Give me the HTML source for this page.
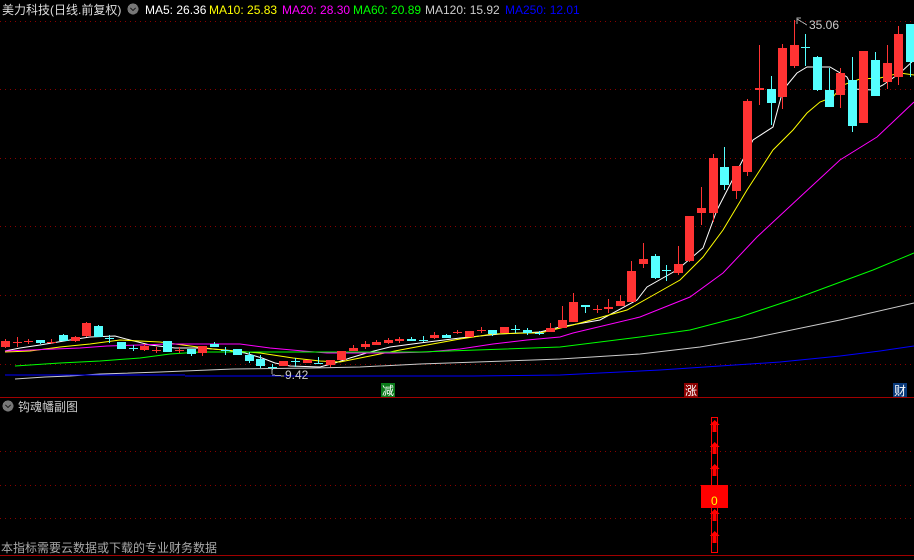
<!DOCTYPE html>
<html><head><meta charset="utf-8"><style>
html,body{margin:0;padding:0;background:#000;width:914px;height:560px;overflow:hidden}
svg{display:block}
text{font-family:"Liberation Sans","Noto Sans CJK SC",sans-serif}
</style></head><body>
<svg id="s" width="914" height="560" viewBox="0 0 914 560" xmlns="http://www.w3.org/2000/svg" shape-rendering="crispEdges">
<rect width="914" height="560" fill="#000"/>
<g stroke="#8a0000" stroke-dasharray="1,4" stroke-width="1">
<line x1="0" y1="21.5" x2="914" y2="21.5"/><line x1="0" y1="89.5" x2="914" y2="89.5"/>
<line x1="0" y1="158.5" x2="914" y2="158.5"/><line x1="0" y1="226.5" x2="914" y2="226.5"/>
<line x1="0" y1="295.5" x2="914" y2="295.5"/><line x1="0" y1="364.5" x2="914" y2="364.5"/>
<line x1="0" y1="451.5" x2="914" y2="451.5"/><line x1="0" y1="485.5" x2="914" y2="485.5"/>
<line x1="0" y1="518.5" x2="914" y2="518.5"/>
</g>
<line x1="0" y1="397.5" x2="914" y2="397.5" stroke="#a00000"/>
<line x1="0" y1="555.5" x2="914" y2="555.5" stroke="#a00000"/>
<g id="ma" fill="none" stroke-width="1" shape-rendering="auto"></g>
<g id="cd"></g>
<text x="2" y="14" fill="#ddd" font-size="12">美力科技(日线.前复权)</text>
<circle cx="133" cy="9" r="5.5" fill="#777"/><path d="M130.5 8l2.5 2.5 2.5-2.5" stroke="#222" stroke-width="1.3" fill="none"/>
<text x="145" y="14" font-size="12" fill="#fff">MA5: 26.36</text>
<text x="209" y="14" font-size="12" fill="#ff0">MA10: 25.83</text>
<text x="282" y="14" font-size="12" fill="#f0f">MA20: 28.30</text>
<text x="353" y="14" font-size="12" fill="#0f0">MA60: 20.89</text>
<text x="425" y="14" font-size="12" fill="#ccc">MA120: 15.92</text>
<text x="505" y="14" font-size="12" fill="#00f">MA250: 12.01</text>
<path d="M797 24v-6h4M797 19l10 6" stroke="#aaa" fill="none"/>
<text x="809" y="29" font-size="12" fill="#ccc">35.06</text>
<path d="M272 368v6M272 375l12 1" stroke="#aaa" fill="none"/>
<text x="285" y="379" font-size="12" fill="#ccc">9.42</text>
<rect x="381" y="383" width="14" height="14" fill="#0a7a1a"/><text x="382" y="395" font-size="12" fill="#fff">减</text>
<rect x="684" y="383" width="14" height="14" fill="#8a0000"/><text x="685" y="395" font-size="12" fill="#fff">涨</text>
<rect x="893" y="383" width="14" height="14" fill="#0a3a7a"/><text x="894" y="395" font-size="12" fill="#fff">财</text>
<circle cx="8" cy="406" r="5.5" fill="#777"/><path d="M5.5 405l2.5 2.5 2.5-2.5" stroke="#222" stroke-width="1.3" fill="none"/>
<text x="18" y="411" font-size="12" fill="#ccc">钩魂幡副图</text>
<rect x="711.5" y="417.5" width="6" height="135" fill="none" stroke="#f00"/>
<g id="ar" fill="#f00"></g>
<rect x="701" y="485" width="27" height="23" fill="#f00"/>
<text x="711" y="505" font-size="12" fill="#ff0">0</text>
<text x="1" y="552" font-size="12" fill="#aaa">本指标需要云数据或下载的专业财务数据</text>
</svg>
<script>
var NS="http://www.w3.org/2000/svg";
function el(p,t,a){var e=document.createElementNS(NS,t);for(var k in a)e.setAttribute(k,a[k]);p.appendChild(e);return e;}
// [index, top, bottom, wickTop, wickBottom, color r/c]
var C=[[0,341,347,339,348,'r'],[1,342,342,337,347,'r'],[2,341,341,339,344,'r'],[3,340,343,340,344,'c'],[4,342,343,339,344,'r'],[5,335,341,334,341,'c'],[6,337,341,336,342,'r'],[7,323,336,322,337,'r'],[8,326,337,325,337,'c'],[9,338,338,335,343,'c'],[10,342,349,342,349,'c'],[11,348,348,345,351,'c'],[12,346,350,344,351,'r'],[13,350,350,347,353,'r'],[14,341,352,341,352,'c'],[15,350,350,347,353,'r'],[16,349,354,349,356,'c'],[17,346,353,346,356,'r'],[18,344,347,342,347,'c'],[19,350,350,347,355,'c'],[20,349,355,349,355,'c'],[21,355,361,352,363,'c'],[22,359,366,355,368,'c'],[23,367,367,364,370,'c'],[24,361,366,361,366,'r'],[25,361,361,358,367,'c'],[26,360,363,360,363,'r'],[27,363,363,357,364,'c'],[28,360,365,360,367,'r'],[29,351,360,351,360,'r'],[30,348,351,345,351,'r'],[31,344,347,341,349,'r'],[32,342,345,340,345,'r'],[33,340,343,338,344,'r'],[34,339,341,337,343,'r'],[35,339,341,337,341,'c'],[36,340,340,336,342,'c'],[37,335,338,332,339,'r'],[38,335,338,334,338,'c'],[39,332,332,330,334,'r'],[40,331,337,331,337,'r'],[41,330,330,327,333,'r'],[42,330,334,330,336,'c'],[43,327,333,327,333,'r'],[44,329,329,325,333,'c'],[45,330,333,328,335,'c'],[46,333,333,331,335,'c'],[47,328,332,323,332,'r'],[48,320,328,306,328,'r'],[49,302,322,293,322,'r'],[50,305,307,305,313,'c'],[51,309,310,305,313,'r'],[52,307,309,299,313,'r'],[53,301,306,295,306,'r'],[54,271,302,261,302,'r'],[55,259,264,243,268,'r'],[56,256,278,254,279,'c'],[57,270,270,265,281,'c'],[58,264,273,246,275,'r'],[59,216,261,216,262,'r'],[60,208,213,187,225,'r'],[61,158,213,154,222,'r'],[62,167,185,147,190,'c'],[63,166,191,166,199,'r'],[64,101,172,99,176,'r'],[65,88,90,45,105,'r'],[66,89,103,76,125,'c'],[67,48,97,44,109,'r'],[68,45,66,20,68,'r'],[69,47,47,34,66,'c'],[70,57,90,56,91,'c'],[71,90,107,68,107,'c'],[72,73,95,68,108,'r'],[73,80,126,57,132,'c'],[74,51,123,51,123,'r'],[75,60,96,52,96,'c'],[76,63,82,45,89,'r'],[77,34,77,26,85,'r'],[78,24,62,24,77,'c']];
var cd=document.getElementById('cd');
C.forEach(function(d){var x=Math.round(5+d[0]*11.6);var col=d[5]=='r'?'#ff3333':'#55ffff';
el(cd,'rect',{x:x,y:d[3],width:1,height:Math.max(1,d[4]-d[3]),fill:col});
var h=d[2]-d[1];el(cd,'rect',{x:x-4,y:d[1],width:9,height:Math.max(1,h),fill:col});});
var M={'#fff':[[5,351],[20,348],[40,345],[70,340],[90,337],[115,336],[130,340],[150,345],[175,348],[200,348],[225,350],[245,353],[262,358],[275,363],[290,366],[320,367],[335,363],[350,358],[370,352],[390,347],[420,343],[460,338],[500,334],[540,332],[560,327],[600,320],[637,300],[647,287],[677,270],[697,253],[703,248],[717,210],[753,140],[773,127],[783,90],[797,73],[807,67],[830,67],[847,77],[853,89],[873,90],[883,85],[900,73],[914,60]],
'#ff0':[[5,352],[30,351],[60,347],[90,344],[120,340],[160,342],[213,349],[260,353],[293,358],[320,361],[340,362],[360,358],[380,354],[400,350],[427,345],[460,339],[493,334],[527,333],[540,333],[573,325],[627,310],[650,297],[680,280],[703,257],[723,230],[747,190],[773,150],[793,130],[807,113],[820,102],[833,97],[843,85],[860,79],[880,78],[900,73],[914,75]],
'#f0f':[[5,351],[80,348],[107,346],[140,345],[167,344],[240,344],[270,348],[303,351],[327,353],[360,353],[393,353],[427,352],[460,349],[493,344],[527,340],[560,337],[573,333],[640,317],[690,297],[723,273],[757,237],[800,197],[840,160],[877,137],[914,102]],
'#0f0':[[15,366],[60,363],[100,361],[140,358],[170,354],[200,352],[420,352],[560,347],[640,337],[690,330],[740,317],[800,297],[873,270],[914,253]],
'#ccc':[[15,379],[45,377],[70,376],[100,374],[160,372],[233,369],[313,368],[360,367],[420,364],[477,362],[533,360],[560,359],[640,354],[700,347],[753,338],[840,320],[914,303]],
'#00f':[[185,376],[473,376],[560,375],[600,373],[660,370],[720,366],[780,362],[840,356],[880,351],[914,346]]};
var ma=document.getElementById('ma');
for(var c in M){el(ma,'polyline',{points:M[c].map(function(p){return p.join(',')}).join(' '),stroke:c});}
el(ma,'line',{x1:5,y1:375,x2:185,y2:375,stroke:'#00f'});
var ar=document.getElementById('ar');
[420,442,464,509,531].forEach(function(y){el(ar,'path',{d:'M714.5 '+y+'l-5 5h3v7h4v-7h3z'});});
</script>
</body></html>
